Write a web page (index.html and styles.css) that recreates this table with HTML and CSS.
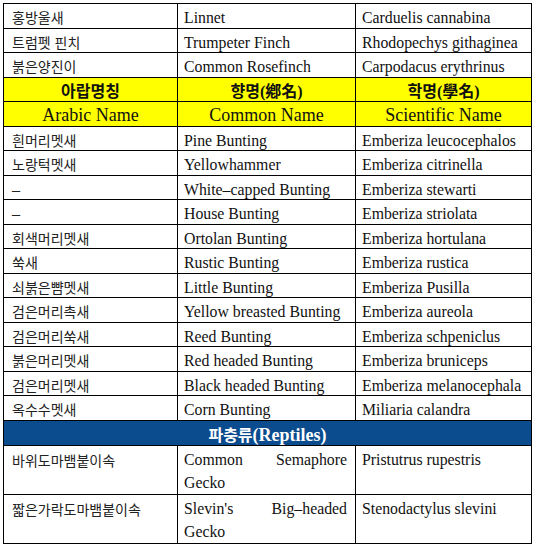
FILE: index.html
```html
<!DOCTYPE html>
<html lang="ko">
<head>
<meta charset="utf-8">
<title>Birds and Reptiles</title>
<link rel="stylesheet" href="styles.css">
</head>
<body>
<table class="names">
<colgroup><col class="c1"><col class="c2"><col class="c3"></colgroup>
<tbody>
<tr><td class="ko">홍방울새</td><td>Linnet</td><td>Carduelis cannabina</td></tr>
<tr><td class="ko">트럼펫 핀치</td><td>Trumpeter Finch</td><td>Rhodopechys githaginea</td></tr>
<tr><td class="ko">붉은양진이</td><td>Common Rosefinch</td><td>Carpodacus erythrinus</td></tr>
<tr class="hd1"><th>아랍명칭</th><th>향명(鄕名)</th><th>학명(學名)</th></tr>
<tr class="hd2"><th>Arabic Name</th><th>Common Name</th><th>Scientific Name</th></tr>
<tr><td class="ko">흰머리멧새</td><td>Pine Bunting</td><td>Emberiza leucocephalos</td></tr>
<tr><td class="ko">노랑턱멧새</td><td>Yellowhammer</td><td>Emberiza citrinella</td></tr>
<tr><td class="ko dash">–</td><td>White–capped Bunting</td><td>Emberiza stewarti</td></tr>
<tr><td class="ko dash">–</td><td>House Bunting</td><td>Emberiza striolata</td></tr>
<tr><td class="ko">회색머리멧새</td><td>Ortolan Bunting</td><td>Emberiza hortulana</td></tr>
<tr><td class="ko">쑥새</td><td>Rustic Bunting</td><td>Emberiza rustica</td></tr>
<tr><td class="ko">쇠붉은뺨멧새</td><td>Little Bunting</td><td>Emberiza Pusilla</td></tr>
<tr><td class="ko">검은머리촉새</td><td>Yellow breasted Bunting</td><td>Emberiza aureola</td></tr>
<tr><td class="ko">검은머리쑥새</td><td>Reed Bunting</td><td>Emberiza schpeniclus</td></tr>
<tr><td class="ko">붉은머리멧새</td><td>Red headed Bunting</td><td>Emberiza bruniceps</td></tr>
<tr><td class="ko">검은머리멧새</td><td>Black headed Bunting</td><td>Emberiza melanocephala</td></tr>
<tr><td class="ko">옥수수멧새</td><td>Corn Bunting</td><td>Miliaria calandra</td></tr>
<tr class="sec"><th colspan="3"><span class="ko-b">파충류</span>(Reptiles)</th></tr>
<tr class="tall"><td class="ko">바위도마뱀붙이속</td><td class="just">Common Semaphore Gecko</td><td>Pristutrus rupestris</td></tr>
<tr class="tall"><td class="ko">짧은가락도마뱀붙이속</td><td class="just">Slevin's Big–headed Gecko</td><td>Stenodactylus slevini</td></tr>
</tbody>
</table>
</body>
</html>
```

FILE: styles.css
```css
html, body {
  margin: 0;
  padding: 0;
  background: #ffffff;
}

body {
  padding: 3px 0 0 3px;
  font-family: "Liberation Serif", "Noto Sans CJK KR", serif;
  color: #111111;
}

.names {
  border-collapse: collapse;
  table-layout: fixed;
  width: 528px;
}

.c1 { width: 174px; }
.c2 { width: 178px; }
.c3 { width: 176px; }

.names td,
.names th {
  border: 1px solid #000000;
  padding: 4px 6px 0;
  height: 19.5px;
  line-height: 19.5px;
  font-size: 15.8px;
  font-weight: normal;
  text-align: left;
  vertical-align: middle;
  white-space: nowrap;
  overflow: hidden;
}

.names td.ko {
  padding-left: 8px;
  font-family: "Noto Sans CJK KR", sans-serif;
  font-size: 14px;
  color: #222222;
}

.names td.dash {
  font-family: "Liberation Serif", serif;
  font-size: 16px;
}

.hd1 th,
.hd2 th {
  background: #ffff00;
  text-align: center;
}

.names .hd1 th {
  font-family: "Liberation Serif", "Noto Sans CJK KR", serif;
  font-weight: bold;
  font-size: 16px;
}

.names .hd2 th {
  font-size: 18px;
}

.names .sec th {
  background: #0b4c8e;
  color: #ffffff;
  text-align: center;
  font-weight: bold;
  font-size: 18px;
}

.ko-b {
  font-family: "Noto Sans CJK KR", sans-serif;
  font-size: 16px;
}

.names .tall td {
  vertical-align: top;
  padding-top: 3px;
  height: 45px;
  line-height: 22.5px;
}

.names td.just {
  white-space: normal;
  text-align: justify;
  padding-right: 8px;
}
```
